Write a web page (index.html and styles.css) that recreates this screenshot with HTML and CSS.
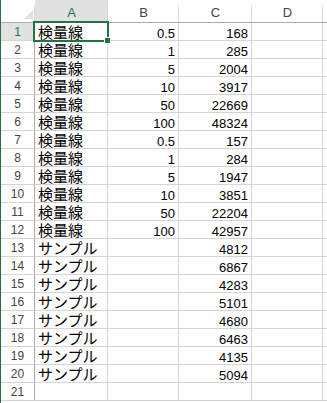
FILE: index.html
```html
<!DOCTYPE html>
<html lang="ja">
<head>
    <meta charset="UTF-8">
    <title>Sheet1</title>
    <link rel="stylesheet" href="styles.css">
</head>
<body>
    <div class="sheet">
        <div class="row head">
            <div class="corner"></div>
            <div class="col sel">A</div>
            <div class="col">B</div>
            <div class="col">C</div>
            <div class="col">D</div>
            <div class="col rest"></div>
        </div>
        <div class="row">
            <div class="num sel">1</div>
            <div class="cell txt active">検量線<span class="handle"></span></div>
            <div class="cell val">0.5</div>
            <div class="cell val">168</div>
            <div class="cell"></div>
            <div class="cell rest"></div>
        </div>
        <div class="row">
            <div class="num">2</div>
            <div class="cell txt">検量線</div>
            <div class="cell val">1</div>
            <div class="cell val">285</div>
            <div class="cell"></div>
            <div class="cell rest"></div>
        </div>
        <div class="row">
            <div class="num">3</div>
            <div class="cell txt">検量線</div>
            <div class="cell val">5</div>
            <div class="cell val">2004</div>
            <div class="cell"></div>
            <div class="cell rest"></div>
        </div>
        <div class="row">
            <div class="num">4</div>
            <div class="cell txt">検量線</div>
            <div class="cell val">10</div>
            <div class="cell val">3917</div>
            <div class="cell"></div>
            <div class="cell rest"></div>
        </div>
        <div class="row">
            <div class="num">5</div>
            <div class="cell txt">検量線</div>
            <div class="cell val">50</div>
            <div class="cell val">22669</div>
            <div class="cell"></div>
            <div class="cell rest"></div>
        </div>
        <div class="row">
            <div class="num">6</div>
            <div class="cell txt">検量線</div>
            <div class="cell val">100</div>
            <div class="cell val">48324</div>
            <div class="cell"></div>
            <div class="cell rest"></div>
        </div>
        <div class="row">
            <div class="num">7</div>
            <div class="cell txt">検量線</div>
            <div class="cell val">0.5</div>
            <div class="cell val">157</div>
            <div class="cell"></div>
            <div class="cell rest"></div>
        </div>
        <div class="row">
            <div class="num">8</div>
            <div class="cell txt">検量線</div>
            <div class="cell val">1</div>
            <div class="cell val">284</div>
            <div class="cell"></div>
            <div class="cell rest"></div>
        </div>
        <div class="row">
            <div class="num">9</div>
            <div class="cell txt">検量線</div>
            <div class="cell val">5</div>
            <div class="cell val">1947</div>
            <div class="cell"></div>
            <div class="cell rest"></div>
        </div>
        <div class="row">
            <div class="num">10</div>
            <div class="cell txt">検量線</div>
            <div class="cell val">10</div>
            <div class="cell val">3851</div>
            <div class="cell"></div>
            <div class="cell rest"></div>
        </div>
        <div class="row">
            <div class="num">11</div>
            <div class="cell txt">検量線</div>
            <div class="cell val">50</div>
            <div class="cell val">22204</div>
            <div class="cell"></div>
            <div class="cell rest"></div>
        </div>
        <div class="row">
            <div class="num">12</div>
            <div class="cell txt">検量線</div>
            <div class="cell val">100</div>
            <div class="cell val">42957</div>
            <div class="cell"></div>
            <div class="cell rest"></div>
        </div>
        <div class="row">
            <div class="num">13</div>
            <div class="cell txt">サンプル</div>
            <div class="cell val"></div>
            <div class="cell val">4812</div>
            <div class="cell"></div>
            <div class="cell rest"></div>
        </div>
        <div class="row">
            <div class="num">14</div>
            <div class="cell txt">サンプル</div>
            <div class="cell val"></div>
            <div class="cell val">6867</div>
            <div class="cell"></div>
            <div class="cell rest"></div>
        </div>
        <div class="row">
            <div class="num">15</div>
            <div class="cell txt">サンプル</div>
            <div class="cell val"></div>
            <div class="cell val">4283</div>
            <div class="cell"></div>
            <div class="cell rest"></div>
        </div>
        <div class="row">
            <div class="num">16</div>
            <div class="cell txt">サンプル</div>
            <div class="cell val"></div>
            <div class="cell val">5101</div>
            <div class="cell"></div>
            <div class="cell rest"></div>
        </div>
        <div class="row">
            <div class="num">17</div>
            <div class="cell txt">サンプル</div>
            <div class="cell val"></div>
            <div class="cell val">4680</div>
            <div class="cell"></div>
            <div class="cell rest"></div>
        </div>
        <div class="row">
            <div class="num">18</div>
            <div class="cell txt">サンプル</div>
            <div class="cell val"></div>
            <div class="cell val">6463</div>
            <div class="cell"></div>
            <div class="cell rest"></div>
        </div>
        <div class="row">
            <div class="num">19</div>
            <div class="cell txt">サンプル</div>
            <div class="cell val"></div>
            <div class="cell val">4135</div>
            <div class="cell"></div>
            <div class="cell rest"></div>
        </div>
        <div class="row">
            <div class="num">20</div>
            <div class="cell txt">サンプル</div>
            <div class="cell val"></div>
            <div class="cell val">5094</div>
            <div class="cell"></div>
            <div class="cell rest"></div>
        </div>
        <div class="row">
            <div class="num">21</div>
            <div class="cell txt"></div>
            <div class="cell val"></div>
            <div class="cell val"></div>
            <div class="cell"></div>
            <div class="cell rest"></div>
        </div>
    </div>
</body>
</html>
```

FILE: styles.css
```css
body {
    margin: 0;
    background-color: #fff;
    font-family: "Liberation Sans", Arial, sans-serif;
    color: #000;
}
.sheet {
    height: 403px;
    overflow: hidden;
    border-left: 1px solid #217346;
}
.row {
    display: grid;
    grid-template-columns: 34px 73px 71px 73px 71px 1fr;
    height: 18px;
}
.row > div {
    box-sizing: border-box;
    border-right: 1px solid #d4d4d4;
    border-bottom: 1px solid #d4d4d4;
    display: flex;
    align-items: flex-end;
    overflow: hidden;
}
.row > .rest {
    border-right: none;
}

/* column headers */
.row.head {
    height: 23px;
}
.row.head > div {
    border-bottom-color: #ababab;
    border-right: none;
    background: linear-gradient(to bottom, rgba(212, 212, 212, 0) 15%, #d4d4d4 45%) right top / 1px 100% no-repeat;
    justify-content: center;
    align-items: center;
    padding-top: 2px;
    font-size: 13px;
    color: #444;
}
.row.head > .rest {
    background: none;
}
.row.head > .col.sel {
    background-color: #e1e1e1;
    color: #217346;
    border-bottom: 2px solid #217346;
    padding-top: 3px;
}
.corner {
    position: relative;
}
.corner::after {
    content: "";
    position: absolute;
    right: 2px;
    bottom: 3px;
    width: 0;
    height: 0;
    border-left: 9px solid transparent;
    border-bottom: 9px solid #dfdfdf;
}

/* row headers */
.row > .num {
    border-right-color: #ababab;
    justify-content: center;
    align-items: center;
    font-size: 12px;
    color: #444;
    padding-top: 1px;
}
.row > .num.sel {
    background-color: #e1e1e1;
    color: #217346;
}

/* cells */
.txt {
    padding-left: 3px;
    padding-top: 1px;
    font-family: "Noto Sans CJK JP", sans-serif;
    font-size: 15px;
    line-height: 16px;
}
.val {
    justify-content: flex-end;
    padding-right: 3px;
    font-size: 13px;
    line-height: 11px;
    padding-bottom: 1px;
}
.row > .active {
    position: relative;
    overflow: visible;
}
.active::before {
    content: "";
    position: absolute;
    left: -2px;
    top: -2px;
    right: -2px;
    bottom: -2px;
    border: 2px solid #217346;
}
.handle {
    position: absolute;
    right: -4px;
    bottom: -4px;
    width: 5px;
    height: 5px;
    background-color: #217346;
    border: 1px solid #fff;
}
```
